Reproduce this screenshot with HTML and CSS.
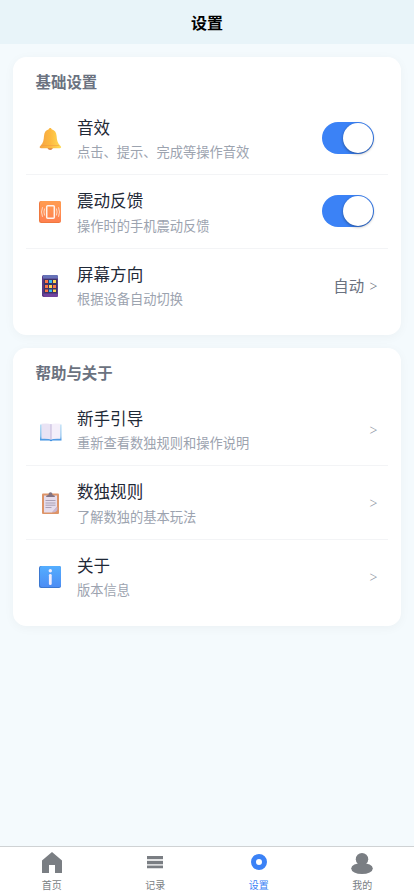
FILE: index.html
```html
<!DOCTYPE html>
<html lang="zh-CN">
<head>
<meta charset="utf-8">
<meta name="viewport" content="width=device-width, initial-scale=1">
<title>设置</title>
<link rel="stylesheet" href="styles.css">
</head>
<body>
<header class="navbar">设置</header>
<main class="content">
  <section class="card">
    <h2 class="card-title">基础设置</h2>
    <div class="row">
      <svg class="icon" viewBox="0 0 22 22">
        <defs><linearGradient id="bell" x1="0" x2="1"><stop offset="0" stop-color="#f5a344"/><stop offset=".5" stop-color="#fdb93f"/><stop offset="1" stop-color="#ffdc55"/></linearGradient></defs>
        <g transform="translate(.7 0)">
        <ellipse cx="10.500" cy="20.300" rx="2.300" ry="1.700" fill="#d98349"/>
        <path d="M10.500 0c.9 0 1.300.6 1.400 1.300 3.200.8 4.700 3.200 5 6.700.3 4 .8 6.800 3.500 9.500.9 1 1.200 1.400.9 2-.4.900-2.400.8-5 .8H4.700c-2.600 0-4.400 0-4.700-.9-.2-.7.3-1.100 1-1.900C3.600 14.800 4 12 4.300 8c.3-3.500 1.700-5.900 4.800-6.700C9.200.6 9.700 0 10.500 0Z" fill="url(#bell)"/>
        <path d="M2 17.600h17.300" stroke="#ee9444" stroke-width=".8" opacity=".65"/>
        </g>
      </svg>
      <div class="text"><div class="name">音效</div><div class="desc">点击、提示、完成等操作音效</div></div>
      <div class="switch"><span class="knob"></span></div>
    </div>
    <div class="row">
      <svg class="icon" viewBox="0 0 22 22">
        <defs><linearGradient id="vib" x1="0" y1="0" x2="0" y2="1"><stop offset="0" stop-color="#ff9d50"/><stop offset="1" stop-color="#ff8050"/></linearGradient></defs>
        <rect width="22" height="22" rx="2.200" fill="#ef783e"/><rect x="1" width="21" height="21" rx="2" fill="url(#vib)"/>
        <rect x="7.700" y="4.700" width="7.600" height="12.600" rx="1" fill="none" stroke="#fff4ee" stroke-width="1.500"/>
        <path d="M5.600 7.500q-1.300 3.500 0 7M3.500 6.200q-2 4.800 0 9.600M17.400 7.500q1.300 3.500 0 7M19.500 6.200q2 4.800 0 9.600" fill="none" stroke="#ffe0d0" stroke-width=".9"/>
      </svg>
      <div class="text"><div class="name">震动反馈</div><div class="desc">操作时的手机震动反馈</div></div>
      <div class="switch"><span class="knob"></span></div>
    </div>
    <div class="row">
      <svg class="icon" viewBox="0 0 22 22">
        <rect x="3" width="16" height="22" rx="1.700" fill="#573a87"/><path d="M4.500 0H17.500q1.500 0 1.500 1.500V3.500H4V1Z" fill="#6672b8"/><path d="M4 19h15v1.500q0 1.500-1.500 1.500h-12Z" fill="#71429c"/>
        <rect x="5" y="4" width="13" height="14" fill="#3e3465"/>
        <g fill="#ff7545"><rect x="6" y="5" width="3" height="3"/><rect x="6" y="10" width="3" height="3"/><rect x="6" y="14.500" width="3" height="2.500"/><rect x="14" y="10" width="3" height="3"/></g>
        <g fill="#38b9f3"><rect x="10" y="5" width="3" height="3"/><rect x="10" y="14.500" width="3" height="2.500"/></g>
        <g fill="#ffd552"><rect x="14" y="5" width="3" height="3"/><rect x="10" y="10" width="3" height="3"/><rect x="14" y="14.500" width="3" height="2.500"/></g>
      </svg>
      <div class="text"><div class="name">屏幕方向</div><div class="desc">根据设备自动切换</div></div>
      <span class="value">自动</span><span class="arrow arrow-dark">&gt;</span>
    </div>
  </section>
  <section class="card">
    <h2 class="card-title">帮助与关于</h2>
    <div class="row">
      <svg class="icon" viewBox="0 0 22 22">
        <defs><linearGradient id="cover" x1="0" y1="0" x2="0" y2="1"><stop offset="0" stop-color="#b7dff5"/><stop offset=".7" stop-color="#8dc3ee"/><stop offset="1" stop-color="#2f86df"/></linearGradient></defs>
        <g transform="translate(.5 1)">
        <path d="M.5 4.500h21.500v16h-9q-1.500 1.500-3 0H.5Z" fill="url(#cover)"/>
        <path d="M2 3.700q7-.7 9.500.5v15.300q-2-1-9.500-.7Z" fill="#e9e3f4"/><path d="M20.800 3.700q-7-.7-9.300.5v15.300q2-1 9.300-.7Z" fill="#f4effa"/>
        <path d="M11.500 4.200v15.300" stroke="#c2b6d9" stroke-width="1"/>
        </g>
      </svg>
      <div class="text"><div class="name">新手引导</div><div class="desc">重新查看数独规则和操作说明</div></div>
      <span class="arrow">&gt;</span>
    </div>
    <div class="row">
      <svg class="icon" viewBox="0 0 22 22">
        <rect x="3" y="1.500" width="17" height="20.500" rx="1" fill="#dd9468"/>
        <path d="M5 3.500h13v11.500l-5 5.500H5Z" fill="#e5dcec"/><path d="M18 14.500l-5 6q5.500 0 5.500-4Z" fill="#c9b8d5"/>
        <path d="M7 5q0-2 2.500-2Q9.500.2 11.500.2T13.500 3q2.500 0 2.500 2Z" fill="#827381"/>
        <path d="M6.500 8.500h10M6.500 11h10M6.500 13.200h10M6.500 15.500h6" stroke="#aaa0b5" stroke-width="1"/>
      </svg>
      <div class="text"><div class="name">数独规则</div><div class="desc">了解数独的基本玩法</div></div>
      <span class="arrow">&gt;</span>
    </div>
    <div class="row">
      <svg class="icon" viewBox="0 0 22 22">
        <defs><linearGradient id="info" x1="0" y1="0" x2="0" y2="1"><stop offset="0" stop-color="#54aeff"/><stop offset="1" stop-color="#4c8df4"/></linearGradient></defs>
        <rect width="22" height="22" rx="2" fill="#3b78d0"/><rect x="1" width="21" height="21" rx="2" fill="url(#info)"/>
        <circle cx="11.300" cy="4.800" r="1.700" fill="#f4eefc"/><rect x="9.900" y="8" width="2.800" height="11" rx="1.300" fill="#f4eefc"/>
      </svg>
      <div class="text"><div class="name">关于</div><div class="desc">版本信息</div></div>
      <span class="arrow">&gt;</span>
    </div>
  </section>
</main>
<nav class="tabbar">
  <div class="tab">
    <svg class="tab-icon" viewBox="0 0 24 24"><path d="M12 2L22 10.500V23H15V15H9V23H2V10.500Z" fill="#7a7e83"/></svg>
    <span>首页</span>
  </div>
  <div class="tab">
    <svg class="tab-icon" viewBox="0 0 24 24"><path d="M4 6h16v3H4zM4 11h16v3H4zM4 15.500h16v2.700H4z" fill="#7a7e83"/><path d="M4 10h16M4 14.800h16" stroke="#c9cbcd" stroke-width="1"/></svg>
    <span>记录</span>
  </div>
  <div class="tab active">
    <svg class="tab-icon" viewBox="0 0 24 24"><circle cx="12" cy="12" r="5.500" fill="none" stroke="#3b82f6" stroke-width="5"/></svg>
    <span>设置</span>
  </div>
  <div class="tab">
    <svg class="tab-icon" viewBox="0 0 24 24"><circle cx="12" cy="9.200" r="6.200" fill="#7a7e83"/><ellipse cx="12" cy="18.500" rx="10.800" ry="5.500" fill="#7a7e83"/></svg>
    <span>我的</span>
  </div>
</nav>
</body>
</html>
```
FILE: styles.css
```css
* { box-sizing: border-box; }
body {
  margin: 0;
  height: 896px;
  display: flex;
  flex-direction: column;
  background: #f4fafd;
  font-family: "Noto Sans CJK SC", sans-serif;
}
.navbar {
  height: 44px;
  flex: none;
  background: #e8f4f9;
  text-align: center;
  font-size: 16px;
  line-height: 45px;
  font-weight: 700;
  color: #000;
}
.content {
  flex: 1;
  padding: 13px;
  display: flex;
  flex-direction: column;
  gap: 13px;
}
.card {
  height: 278px;
  background: #fff;
  border-radius: 13.25px;
  padding: 0 13px;
  box-shadow: 0 2px 11px rgba(0, 0, 0, .04);
}
.card-title {
  margin: 0;
  height: 44.4px;
  padding: 13px 0 0 9.5px;
  font-size: 15.45px;
  line-height: 23px;
  font-weight: 700;
  color: #6b7280;
}
.row {
  height: 73.65px;
  display: flex;
  align-items: center;
  padding: 0 14px 0 13px;
  border-bottom: 1px solid #f3f4f6;
}
.row:last-child { border-bottom-color: transparent; }
.icon {
  width: 22px;
  height: 22px;
  margin: 2px 16px 0 0;
  overflow: visible;
  flex: none;
}
.text { flex: 1; padding-top: 1px; }
.name {
  font-size: 16.56px;
  line-height: 24px;
  color: #1f2937;
}
.desc {
  margin-top: 3.4px;
  font-size: 13.25px;
  line-height: 20px;
  color: #9ca3af;
}
.switch {
  width: 52px;
  height: 32px;
  padding: 1px;
  border-radius: 16px;
  background: #3b82f6;
  display: flex;
  justify-content: flex-end;
}
.knob {
  width: 30px;
  height: 30px;
  border-radius: 50%;
  background: #fff;
  box-shadow: 0 1px 3px rgba(0, 0, 0, .4);
}
.value {
  font-size: 15.45px;
  line-height: 23px;
  color: #6b7280;
  margin: 1px 5.5px 0 0;
}
.arrow {
  font-family: "Liberation Serif", serif;
  font-size: 14px;
  line-height: 20px;
  color: #8f96a3;
  margin: 4px -3.5px 0 0;
}
.arrow-dark { color: #6b7280; }
.tabbar {
  height: 50px;
  flex: none;
  display: flex;
  background: #fff;
  border-top: 1px solid #cfd2d4;
}
.tab {
  flex: 1;
  display: flex;
  flex-direction: column;
  align-items: center;
  padding-top: 3px;
  font-size: 10px;
  line-height: 15px;
  color: #7a7e83;
}
.tab-icon {
  width: 24px;
  height: 24px;
  margin-bottom: 3px;
}
.active { color: #3b82f6; }
```
